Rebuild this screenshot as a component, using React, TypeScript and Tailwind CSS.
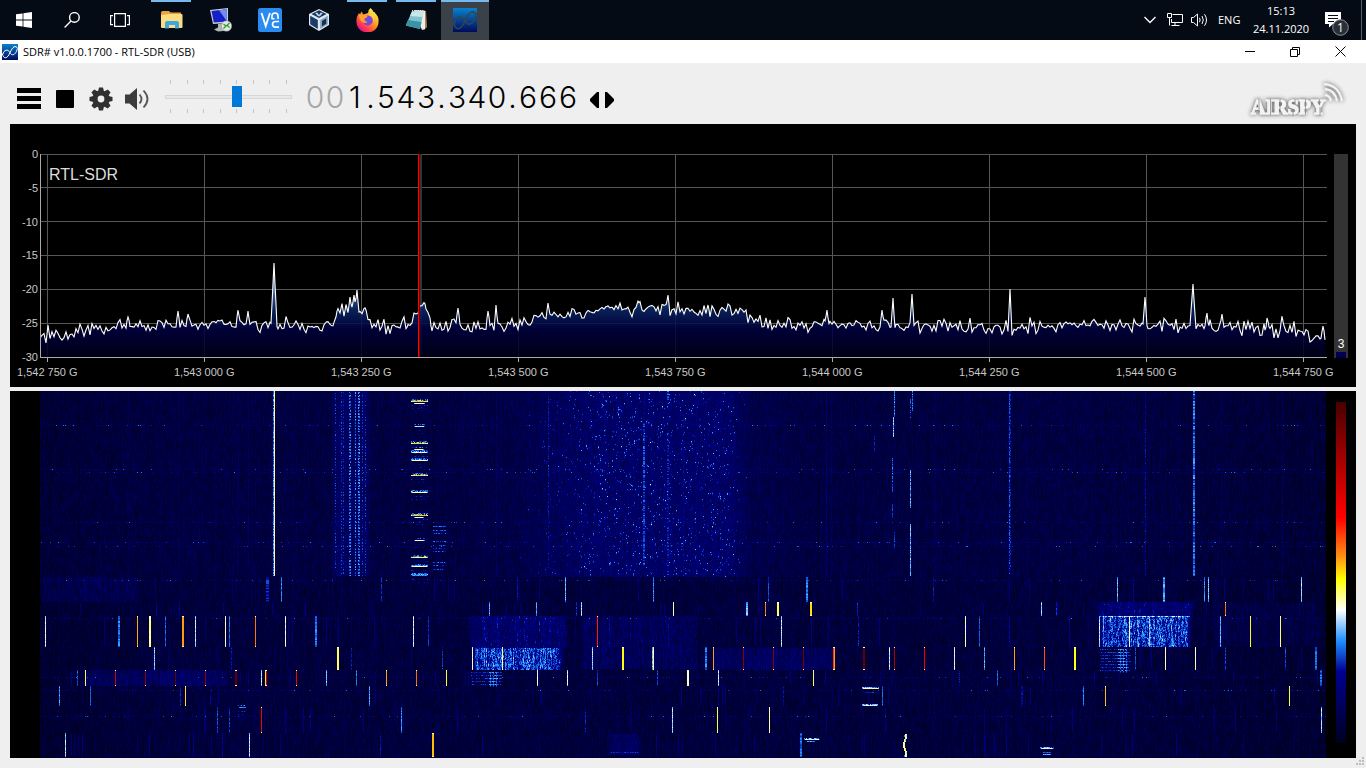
import { ReactNode, useEffect, useRef } from "react";

const FREQ_LABELS = [
  "1,542 750 G",
  "1,543 000 G",
  "1,543 250 G",
  "1,543 500 G",
  "1,543 750 G",
  "1,544 000 G",
  "1,544 250 G",
  "1,544 500 G",
  "1,544 750 G",
];
const DB_LABELS = ["0", "-5", "-10", "-15", "-20", "-25", "-30"];

const PLOT_W = 1287;
const PLOT_H = 204;
const FALL_W = 1286;
const FALL_H = 367;

// Small seeded generator so the noise floor is the same on every render
function createRandom(seed: number) {
  let s = seed;
  return () => {
    s = (s + 0x6d2b79f5) | 0;
    let t = Math.imul(s ^ (s >>> 15), 1 | s);
    t = (t + Math.imul(t ^ (t >>> 7), 61 | t)) ^ t;
    return ((t ^ (t >>> 14)) >>> 0) / 4294967296;
  };
}

/* ---------- Spectrum ---------- */

// [x, y] of the average noise floor
const FLOOR: [number, number][] = [
  [0, 184], [20, 180], [60, 175], [110, 172], [160, 171], [230, 171],
  [293, 172], [297, 158], [312, 155], [325, 158], [330, 172], [367, 173],
  [380, 154], [385, 151], [391, 172], [480, 171], [500, 164], [540, 158],
  [580, 156], [640, 155], [690, 158], [700, 160], [725, 170], [780, 171],
  [840, 173], [960, 175], [1060, 172], [1150, 172], [1210, 175],
  [1260, 179], [1280, 184], [1287, 190],
];

// [x, y, half width] of the carriers
const PEAKS: [number, number, number][] = [
  [88, 163, 1], [138, 157, 1], [148, 160, 1], [198, 156, 1], [208, 157, 1],
  [234, 109, 2], [310, 143, 1], [314, 141, 1], [317, 136, 1], [418, 154, 1],
  [448, 157, 1], [456, 151, 1], [508, 149, 1], [598, 147, 1], [628, 141, 1],
  [668, 151, 1], [787, 156, 1], [842, 156, 1], [853, 144, 1], [872, 140, 1],
  [970, 135, 1], [1105, 143, 1], [1153, 130, 2], [1167, 159, 1],
  [1182, 160, 1], [1227, 164, 1], [1242, 162, 1], [1283, 172, 1],
];

function floorAt(x: number) {
  for (let i = 1; i < FLOOR.length; i++) {
    const [x1, y1] = FLOOR[i];
    if (x <= x1) {
      const [x0, y0] = FLOOR[i - 1];
      return y0 + ((x - x0) / (x1 - x0)) * (y1 - y0);
    }
  }
  return FLOOR[FLOOR.length - 1][1];
}

function buildTrace() {
  const random = createRandom(23);
  const points: string[] = [];
  let previous = 0;
  let next = 0;
  for (let x = 0; x < FALL_W; x++) {
    // The bins are wider than a pixel, so the noise changes every other column
    if (x % 2 === 0) {
      previous = next;
      const spike = random() < 0.09 ? random() * 8 : 0;
      next = (random() + random() - 1) * 8 - spike;
    }
    const noise = x % 2 === 0 ? previous : (previous + next) / 2;
    let y = floorAt(x) + noise;
    for (const [px, py, half] of PEAKS) {
      const d = Math.abs(x - px);
      if (d <= half) y = Math.min(y, py + (d / (half + 1)) * (y - py));
    }
    points.push(`${x} ${y.toFixed(1)}`);
  }
  return points;
}

const TRACE = buildTrace();
const TRACE_PATH = `M${TRACE.join("L")}`;
const FILL_PATH = `M0 203L${TRACE.join("L")}L1286 203Z`;
const GRID_X = [7, 164, 321, 478, 635, 792, 949, 1106, 1263];
const GRID_Y = [0, 33, 67, 101, 135, 169];

function Spectrum() {
  return (
    <section aria-label="Spectrum" className="bg-black pt-6 pb-[7px]">
      <div className="flex h-[215px]">
        <div className="flex w-[30px] shrink-0 flex-col justify-between pr-[2px] text-right text-[11px] leading-3 text-[#c8c8c8]">
          {DB_LABELS.map((db) => (
            <span key={db}>{db}</span>
          ))}
        </div>
        <div className="relative min-w-0 flex-1 pt-[6px]">
          <svg
            viewBox={`0 0 ${PLOT_W} 209`}
            preserveAspectRatio="none"
            className="block h-[209px] w-full"
          >
            <defs>
              <linearGradient id="spectrumFill" gradientUnits="userSpaceOnUse" x1="0" y1="0" x2="0" y2={PLOT_H}>
                <stop offset="0" stopColor="#ffffff" />
                <stop offset="0.55" stopColor="#76a5ea" />
                <stop offset="0.68" stopColor="#4a6cae" />
                <stop offset="0.76" stopColor="#0a2868" />
                <stop offset="0.86" stopColor="#000040" />
                <stop offset="1" stopColor="#000018" />
              </linearGradient>
            </defs>
            <g stroke="#565656" shapeRendering="crispEdges">
              {GRID_Y.map((y) => (
                <line key={y} x1="0" x2={PLOT_W} y1={y + 0.5} y2={y + 0.5} />
              ))}
              {GRID_X.map((x) => (
                <line key={x} x1={x + 0.5} x2={x + 0.5} y1="0" y2="203" />
              ))}
            </g>
            <rect x="379" y="0" width="3" height="203" fill="#333333" />
            <path d={FILL_PATH} fill="url(#spectrumFill)" fillOpacity="0.86" />
            <path d={TRACE_PATH} fill="none" stroke="#ffffff" strokeWidth="1.1" />
            <rect x="378" y="0" width="1" height="203" fill="#ff0000" />
            <rect x="379" y="0" width="1" height="203" fill="#7a0000" />
            <g stroke="#aaaaaa" shapeRendering="crispEdges">
              <line x1="0.5" x2="0.5" y1="0" y2="203" />
              <line x1="0" x2={PLOT_W} y1="203.5" y2="203.5" />
              {GRID_X.map((x) => (
                <line key={x} x1={x + 0.5} x2={x + 0.5} y1="203" y2="208" />
              ))}
            </g>
          </svg>
          <span className="absolute top-[18px] left-[9px] text-base leading-[18px] text-[#dcdcdc]">
            RTL-SDR
          </span>
        </div>
        <div className="mt-[6px] mr-2 ml-[7px] flex h-[204px] w-[14px] shrink-0 flex-col items-center justify-end bg-[#333333] text-xs leading-4 text-white">
          <span>3</span>
          <div className="h-[6px] w-[10px] bg-[#000050]" />
        </div>
      </div>
      <div className="flex justify-between pt-[2px] pr-[23px] pl-[7px] text-[11px] leading-[15px] text-[#c8c8c8]">
        {FREQ_LABELS.map((f) => (
          <span key={f} className="w-[60px] text-center whitespace-nowrap">
            {f}
          </span>
        ))}
      </div>
    </section>
  );
}

/* ---------- Waterfall ---------- */

// Signal strength to colour, from the noise floor to the strongest level
const PALETTE: [number, number, number, number][] = [
  [0, 0, 0, 32],
  [0.21, 0, 0, 145],
  [0.3, 30, 144, 255],
  [0.39, 255, 255, 255],
  [0.48, 255, 255, 0],
  [0.55, 254, 140, 20],
  [0.66, 255, 0, 0],
  [1, 74, 0, 0],
];

type Mark = [x: number, width: number, level: number];

// Short bursts, grouped by the time slot they were sent in
const SLOTS: { from: number; to: number; marks: Mark[] }[] = [
  {
    from: 187,
    to: 210,
    marks: [
      [226, 3, 0.24], [241, 1, 0.3], [341, 1, 0.24], [477, 1, 0.22],
      [525, 1, 0.33], [598, 1, 0.18], [613, 1, 0.3], [728, 1, 0.26],
      [766, 2, 0.3], [893, 1, 0.22], [1077, 1, 0.33], [1093, 1, 0.2],
      [1123, 2, 0.32], [1164, 1, 0.3], [1168, 1, 0.34], [1261, 1, 0.36],
    ],
  },
  {
    from: 212,
    to: 224,
    marks: [
      [116, 1, 0.22], [139, 1, 0.2], [265, 1, 0.2], [449, 1, 0.32],
      [496, 1, 0.32], [536, 1, 0.25], [541, 1, 0.37], [633, 1, 0.42],
      [706, 2, 0.34], [725, 1, 0.57], [737, 2, 0.44], [770, 2, 0.5],
      [817, 1, 0.24], [1001, 1, 0.36], [1016, 1, 0.25], [1185, 1, 0.58],
    ],
  },
  {
    from: 226,
    to: 255,
    marks: [
      [5, 1, 0.39], [78, 2, 0.29], [97, 1, 0.53], [109, 2, 0.43],
      [125, 1, 0.27], [142, 2, 0.54], [155, 1, 0.37], [185, 1, 0.41],
      [189, 1, 0.29], [215, 1, 0.57], [245, 1, 0.39], [275, 2, 0.29],
      [373, 1, 0.38], [388, 1, 0.24], [557, 1, 0.64], [569, 1, 0.2],
      [628, 1, 0.2], [741, 1, 0.37], [788, 1, 0.17], [818, 1, 0.23],
      [925, 1, 0.41], [939, 1, 0.27], [969, 1, 0.2], [1029, 1, 0.2],
      [1059, 1, 0.37], [1089, 1, 0.41], [1109, 1, 0.34], [1180, 1, 0.33],
      [1210, 1, 0.48], [1240, 1, 0.45],
    ],
  },
  {
    from: 257,
    to: 278,
    marks: [
      [114, 1, 0.35], [191, 1, 0.22], [297, 2, 0.45], [311, 1, 0.23],
      [402, 1, 0.24], [432, 1, 0.41], [462, 1, 0.43], [552, 1, 0.36],
      [582, 2, 0.48], [612, 1, 0.34], [613, 1, 0.44], [665, 2, 0.29],
      [673, 1, 0.54], [703, 1, 0.88], [733, 1, 0.88], [763, 1, 0.92],
      [793, 1, 0.62], [794, 1, 0.54], [823, 2, 0.96], [849, 1, 0.37],
      [854, 1, 0.82], [884, 1, 0.68], [914, 1, 0.4], [944, 1, 0.32],
      [974, 1, 0.54], [1004, 1, 0.6], [1034, 2, 0.47], [1095, 1, 0.25],
      [1125, 1, 0.42], [1155, 1, 0.42], [1185, 1, 0.25], [1245, 1, 0.25],
      [1275, 2, 0.28],
    ],
  },
  {
    from: 280,
    to: 294,
    marks: [
      [37, 1, 0.27], [45, 1, 0.47], [75, 1, 0.75], [105, 1, 0.88],
      [135, 1, 0.96], [165, 1, 0.88], [195, 2, 0.96], [221, 1, 0.37],
      [225, 1, 0.5], [226, 1, 0.76], [256, 1, 0.7], [286, 1, 0.34],
      [316, 1, 0.29], [346, 1, 0.54], [376, 1, 0.58], [406, 1, 0.47],
      [497, 1, 0.4], [527, 1, 0.38], [557, 1, 0.26], [617, 1, 0.25],
      [647, 2, 0.42], [678, 1, 0.36], [773, 1, 0.46], [919, 1, 0.22],
      [957, 1, 0.27], [1280, 2, 0.28],
    ],
  },
  {
    from: 296,
    to: 314,
    marks: [
      [19, 1, 0.31], [50, 1, 0.27], [140, 1, 0.24], [145, 1, 0.5],
      [170, 1, 0.2], [329, 1, 0.32], [682, 1, 0.17], [743, 1, 0.22],
      [798, 1, 0.17], [842, 1, 0.27], [981, 2, 0.21], [1043, 1, 0.3],
      [1065, 1, 0.52], [1249, 1, 0.47],
    ],
  },
  {
    from: 317,
    to: 341,
    marks: [
      [177, 1, 0.26], [189, 1, 0.24], [221, 1, 0.68], [361, 1, 0.3],
      [545, 1, 0.23], [632, 1, 0.37], [677, 1, 0.46], [729, 1, 0.44],
      [1281, 1, 0.36],
    ],
  },
  {
    from: 343,
    to: 365,
    marks: [
      [25, 1, 0.36], [182, 1, 0.2], [209, 1, 0.37], [340, 1, 0.22],
      [392, 2, 0.52], [760, 2, 0.28], [944, 2, 0.16],
    ],
  },
];

// Carriers that last: [x, from, to, width, level]
const CARRIERS: [number, number, number, number, number][] = [
  [233, 0, 185, 1, 0.31], [234, 0, 185, 1, 0.45], [508, 0, 178, 1, 0.22],
  [604, 0, 32, 1, 0.2], [603, 32, 175, 2, 0.26], [627, 0, 10, 2, 0.27],
  [627, 42, 184, 2, 0.23], [643, 20, 184, 1, 0.2], [656, 0, 184, 1, 0.19],
  [786, 0, 185, 1, 0.18], [791, 0, 185, 1, 0.12], [834, 45, 62, 1, 0.24],
  [854, 0, 26, 1, 0.3], [853, 26, 46, 1, 0.35], [852, 67, 101, 1, 0.28],
  [852, 112, 128, 1, 0.25], [854, 140, 158, 1, 0.26], [872, 0, 20, 1, 0.3],
  [870, 8, 28, 1, 0.26], [870, 79, 117, 1, 0.33], [870, 133, 185, 1, 0.34],
  [895, 0, 185, 1, 0.12], [969, 0, 183, 1, 0.27], [970, 0, 183, 1, 0.22],
  [1105, 0, 185, 1, 0.21], [1153, 0, 185, 2, 0.3], [1242, 0, 185, 1, 0.13],
  [444, 0, 185, 1, 0.13], [456, 0, 185, 1, 0.15], [208, 0, 185, 1, 0.13],
  [198, 0, 185, 1, 0.12], [88, 0, 185, 1, 0.1], [138, 0, 185, 1, 0.11],
  [268, 0, 185, 1, 0.11], [987, 0, 185, 1, 0.12], [1181, 0, 185, 1, 0.12],
];

// Wide band noise: [x0, x1, y0, y1, level, spread]
const BANDS: [number, number, number, number, number, number][] = [
  [291, 331, 0, 185, 0.06, 0.03],
  [428, 529, 225, 257, 0.09, 0.06],
  [431, 524, 257, 279, 0.19, 0.07],
  [540, 660, 225, 278, 0.05, 0.045],
  [670, 796, 257, 279, 0.06, 0.04],
  [40, 190, 279, 295, 0.06, 0.035],
  [0, 100, 186, 211, 0.04, 0.025],
  [1055, 1155, 211, 226, 0.1, 0.05],
  [1058, 1152, 225, 256, 0.19, 0.07],
  [1170, 1284, 212, 256, 0.025, 0.03],
  [566, 602, 343, 364, 0.06, 0.035],
];

// Voice frames drawn as short horizontal dashes: [x0, x1, y, level]
const FRAMES: [number, number, number, number][] = [
  [371, 388, 10, 0.53], [374, 385, 12, 0.45], [374, 385, 35, 0.4],
  [371, 388, 52, 0.53], [374, 384, 58, 0.46], [371, 388, 61, 0.42],
  [371, 388, 69, 0.44], [371, 388, 84, 0.52], [371, 388, 101, 0.44],
  [371, 388, 124, 0.55], [374, 384, 126, 0.46], [374, 385, 149, 0.42],
  [371, 388, 166, 0.49], [371, 388, 175, 0.44], [371, 388, 184, 0.33],
  [198, 207, 316, 0.33], [822, 839, 297, 0.46], [824, 836, 301, 0.26],
  [822, 838, 314, 0.41], [764, 780, 348, 0.41], [766, 776, 350, 0.34],
  [1000, 1014, 357, 0.41], [1002, 1012, 361, 0.31], [1002, 1012, 363, 0.34],
  [569, 600, 361, 0.26],
];

const DOTTED_ROWS = [34, 78, 81, 131, 151, 155, 189, 227, 286, 299, 325];

function renderWaterfall(ctx: CanvasRenderingContext2D) {
  const random = createRandom(42);
  const level = new Float32Array(FALL_W * FALL_H);
  const set = (x: number, y: number, v: number) => {
    if (x < 0 || y < 0 || x >= FALL_W || y >= FALL_H) return;
    const i = y * FALL_W + x;
    level[i] = Math.max(level[i], v);
  };

  // Noise floor, streaky along the time axis
  for (let x = 0; x < FALL_W; x++) {
    const edge = Math.max(0, Math.min(1, x / 140, (FALL_W - x) / 200));
    const hump = Math.max(0, Math.min((x - 470) / 90, 1, (710 - x) / 20));
    const halo = Math.max(0, Math.min((x - 400) / 120, 1, (780 - x) / 70));
    const column = (random() - 0.5) * 0.018;
    let drift = 0;
    let speck = 0;
    for (let y = 0; y < FALL_H; y++) {
      drift = drift * 0.65 + (random() - 0.5) * 0.055;
      const floor = (y < 186 ? 0.04 : 0.032) + edge * 0.02;
      let v = floor + column + drift;
      if (y < 186) {
        v += halo * 0.018 + hump * (0.05 + (random() - 0.5) * 0.08);
        if (random() < 0.05 * hump) speck = 0.05 + random() * 0.12;
        v += speck;
        speck = speck > 0.05 ? speck * 0.5 : 0;
      }
      level[y * FALL_W + x] = Math.max(0, v);
    }
  }

  for (const [x0, x1, y0, y1, add, spread] of BANDS) {
    for (let x = x0; x < x1; x++) {
      const column = (random() - 0.5) * spread;
      const taper = Math.min(1, (x - x0 + 1) / 6, (x1 - x) / 6);
      let drift = 0;
      for (let y = y0; y < y1; y++) {
        drift = drift * 0.4 + (random() - 0.5) * spread * 1.8;
        const v = (add + column + drift) * taper;
        level[y * FALL_W + x] += Math.max(0, v);
      }
    }
  }

  // Dotted data carriers
  for (const x of [295, 301, 303, 309, 310, 315, 318, 319, 322, 325]) {
    const strong = x >= 309 && x <= 319;
    for (let y = 1; y < 185; y++) {
      if (y % 3 && random() < 0.85) {
        set(x, y, (strong ? 0.24 : 0.19) + random() * 0.09);
      }
    }
  }
  for (const [x0, y0, y1] of [[431, 281, 294], [1060, 258, 280]]) {
    for (let y = y0; y < y1; y += 3) {
      for (let x = x0; x < x0 + 31; x++) {
        const strong = x > x0 + 17 && x < x0 + 27;
        if (random() < 0.85) set(x, y, (strong ? 0.26 : 0.19) + random() * 0.08);
        if (strong && x % 3 === 0) {
          set(x, y + 1, 0.28);
          set(x, y + 2, 0.24);
        }
        if (random() < 0.5) set(x, y + 1, 0.15);
      }
    }
  }

  for (const y of DOTTED_ROWS) {
    for (let x = 0; x < FALL_W; x++) {
      if (random() < 0.4) set(x, y, 0.12 + random() * 0.06);
      if (random() < 0.045) set(x, y, 0.2 + random() * 0.1);
    }
  }

  // Weak short lived traces
  for (let i = 0; i < 190; i++) {
    const x = Math.floor(random() * FALL_W);
    const slot = SLOTS[Math.floor(random() * SLOTS.length)];
    const weak = 0.09 + random() * 0.08;
    for (let y = slot.from; y < slot.to; y++) set(x, y, weak + random() * 0.04);
  }

  for (const [x, y0, y1, width, v] of CARRIERS) {
    for (let y = y0; y < y1; y++) {
      const fade = v > 0.4 ? random() * 0.06 : random() * 0.11 - 0.03;
      for (let k = 0; k < width; k++) set(x + k, y, v - fade);
    }
  }

  for (const { from, to, marks } of SLOTS) {
    for (const [x, width, v] of marks) {
      for (let y = from; y < to; y++) {
        const wobble = v < 0.45 ? (random() - 0.6) * 0.07 : 0;
        for (let k = 0; k < width; k++) set(x + k, y, v + wobble);
      }
      // Key-up and key-down edges are weaker than the burst itself
      for (let k = 0; k < width; k++) {
        set(x + k, from - 1, Math.min(v * 0.9, 0.4));
        set(x + k, to, Math.min(v * 0.9, 0.44));
      }
    }
  }

  for (const [x0, x1, y, v] of FRAMES) {
    const wide = x1 - x0 > 13 && x1 - x0 < 20;
    for (let x = x0; x < x1; x++) {
      const tail = x === x0 || x === x1 - 1 ? 0.1 : 0;
      set(x, y, v - tail - random() * 0.06);
      if (wide && random() < 0.9) set(x, y - 1, 0.25 + random() * 0.12);
      if (x < 400 && random() < 0.6) set(x, y - 2, 0.22 + random() * 0.1);
      if (x < 400 && random() < 0.6) set(x, y + 4, 0.16 + random() * 0.09);
      if (x < 400 && random() < 0.5) set(x, y + 7, 0.16 + random() * 0.08);
    }
  }
  for (const y of [135, 139, 142, 150, 154, 157, 160, 171, 174, 178]) {
    for (let x = 393; x < 406; x++) {
      if (random() < 0.85) set(x, y, 0.19 + random() * 0.11);
      if (random() < 0.3) set(x, y + 1, 0.16);
    }
  }

  // Drifting carrier
  for (let y = 343; y < 366; y++) {
    const x = 864 + Math.round(Math.sin(y / 3));
    set(x, y, 0.38 + random() * 0.08);
    set(x + 1, y, 0.34 + random() * 0.14);
    if (random() < 0.4) set(x - 1, y, 0.3);
  }

  const image = ctx.createImageData(FALL_W, FALL_H);
  for (let i = 0; i < level.length; i++) {
    const v = Math.min(0.999, level[i]);
    let s = 1;
    while (PALETTE[s][0] <= v) s++;
    const a = PALETTE[s - 1];
    const b = PALETTE[s];
    const t = (v - a[0]) / (b[0] - a[0]);
    image.data[i * 4] = a[1] + (b[1] - a[1]) * t;
    image.data[i * 4 + 1] = a[2] + (b[2] - a[2]) * t;
    image.data[i * 4 + 2] = a[3] + (b[3] - a[3]) * t;
    image.data[i * 4 + 3] = 255;
  }
  ctx.putImageData(image, 0, 0);
}

function Waterfall() {
  const canvasRef = useRef<HTMLCanvasElement>(null);

  useEffect(() => {
    const ctx = canvasRef.current?.getContext("2d");
    if (ctx) renderWaterfall(ctx);
  }, []);

  return (
    <section aria-label="Waterfall" className="flex min-h-0 flex-1 bg-black pr-[10px] pl-[30px]">
      <div className="min-h-0 min-w-0 flex-1">
        <canvas
          ref={canvasRef}
          width={FALL_W}
          height={FALL_H}
          className="block size-full [image-rendering:pixelated]"
        />
      </div>
      <div className="mt-[11px] mb-[15px] ml-[10px] w-[10px] bg-[linear-gradient(to_bottom,#4a0000_0%,#ff0000_34%,#fe8c14_45%,#ffff00_52%,#ffffff_61%,#1e90ff_70%,#000091_79%,#000020_100%)]" />
    </section>
  );
}

/* ---------- Taskbar ---------- */

interface TaskButtonProps {
  label: string;
  state?: "idle" | "running" | "active";
  children: ReactNode;
}

function TaskButton({ label, state = "idle", children }: TaskButtonProps) {
  return (
    <button
      aria-label={label}
      className={
        state === "active"
          ? "relative flex h-10 w-12 items-center justify-center bg-[#3b4148]"
          : "relative flex h-10 w-[49px] items-center justify-center"
      }
    >
      {state === "running" && (
        <span className="absolute top-0 left-1 h-[2px] w-10 bg-[#76b9ed]" />
      )}
      {state === "active" && (
        <span className="absolute inset-x-0 top-0 h-[2px] bg-[#76b9ed]" />
      )}
      {children}
    </button>
  );
}

function Taskbar() {
  return (
    <header className="flex h-10 shrink-0 justify-between bg-[#050b14] font-['Open_Sans',sans-serif] text-white">
      <nav className="flex" aria-label="Taskbar">
        <button aria-label="Start" className="flex w-12 items-center justify-center">
          <svg width="16" height="16" viewBox="0 0 16 16" fill="#fff">
            <path d="M0 2.3 6.6 1.4V7.6H0zM7.4 1.3 16 0V7.6H7.4zM0 8.4h6.6v6.2L0 13.7zM7.4 8.4H16V16L7.4 14.8z" />
          </svg>
        </button>
        <button aria-label="Search" className="flex w-12 items-center justify-center">
          <svg width="16" height="16" viewBox="0 0 16 16" fill="none" stroke="#fff" strokeWidth="1.4">
            <circle cx="10.4" cy="5.4" r="4.8" />
            <path d="M7 9 .6 15.4" />
          </svg>
        </button>
        <button aria-label="Task view" className="flex w-12 items-center justify-center">
          <svg width="20" height="14" viewBox="0 0 20 14" fill="none" stroke="#fff" strokeWidth="1.2">
            <path d="M4.6.6h10.8v12.8H4.6zM3 2.6H.6v9H3M17 2.6h2.4v9H17" />
          </svg>
        </button>
        <div className="ml-[3px] flex">
          <TaskButton label="File Explorer" state="running">
            <svg width="22" height="20" viewBox="0 0 22 20">
              <path d="M0 2.5 1 1h7l1.5 1.5H20V6H0z" fill="#e8a33d" />
              <path d="M0 5 9 4h11.5q1 0 1 1v12q0 1-1 1H1q-1 0-1-1z" fill="#fbdc82" />
              <path d="M4 18.5V13q0-2 2-2h10q2 0 2 2v5.5h-4V15H8v3.5z" fill="#3fa7e0" />
            </svg>
          </TaskButton>
          <TaskButton label="Remote Desktop">
            <svg width="22" height="24" viewBox="0 0 22 24">
              <path d="m0 2 18-2v15L3 16z" fill="#c9cfd2" />
              <path d="m1.500 3 15.300-1.700v12.200L3.800 14.500z" fill="#1620c8" />
              <path d="m9 2.200 7.800-.9v12z" fill="#6f8dee" />
              <path d="m8 16 6-.5 1 4 4 3-11 1-4-2 4-2z" fill="#aeb6b8" />
              <circle cx="16.500" cy="18" r="5.200" fill="#e4e8e4" stroke="#8a9090" strokeWidth=".6" />
              <path d="m13.500 16 2.500 2-2.500 2.500M19.500 15 17 17.200l2.500 2.300" fill="none" stroke="#2f9a35" strokeWidth="1.300" />
            </svg>
          </TaskButton>
          <TaskButton label="VNC Viewer">
            <svg width="24" height="24" viewBox="0 0 24 24" fill="none" stroke="#fff" strokeWidth="1.900">
              <rect width="24" height="24" rx="2.500" fill="#2a8cf0" stroke="none" />
              <path d="m3.500 5 4.200 13L12 5" />
              <path d="M14 11V8q0-3 3-3t3 3v3M21 13.500h-3.500q-3 0-3 2.800t3 2.800H21M13.500 10.800h3" strokeWidth="1.600" />
            </svg>
          </TaskButton>
          <TaskButton label="VirtualBox">
            <svg width="20" height="22" viewBox="0 0 20 22">
              <path d="m10 0 10 5v11l-10 6-10-6V5z" fill="#dfe8f0" />
              <path d="m10 1.300 7.500 3.700L10 9 2.500 5z" fill="#16365e" />
              <path d="m1.200 6.800 7.600 4.200v8.900l-7.600-4.600z" fill="#1a3c68" />
              <path d="m18.800 6.800-7.600 4.200v8.900l7.600-4.600z" fill="#85a2bf" />
              <path d="m13 12 4.200-2.400v5.200L13 17.300z" fill="#16304f" />
              <path d="M6 3.800h2.500L10 6l1.500-2.200H14L11 7.300H9z" fill="#c5d4e3" />
            </svg>
          </TaskButton>
          <TaskButton label="Firefox" state="running">
            <svg width="23" height="24" viewBox="0 0 23 24">
              <defs>
                <linearGradient id="fox" x1="0.800" y1="0.100" x2="0.200" y2="0.900">
                  <stop offset="0" stopColor="#fff04a" />
                  <stop offset="0.450" stopColor="#ff9220" />
                  <stop offset="0.800" stopColor="#ff3a4c" />
                  <stop offset="1" stopColor="#e3148b" />
                </linearGradient>
              </defs>
              <path d="M14.500 0q2 1.500 3 4 1.500-.3 1.500 1 4 3.500 3.500 9A11 10.500 0 0 1 .5 14Q0 9 3 5q0 1 .8 1.800Q5 4 6 3.500q0 2 1.500 3L12 5q.3-3.500 2.500-5z" fill="url(#fox)" />
              <circle cx="11.800" cy="12.500" r="5" fill="#7a45e0" />
              <path d="M2.800 5.500q2.500 1.500 5 1.200 3-.3 3.700 1.800-.5 1.500-3 2-.5 3 3.300 3.500-3.500 2-6.300-.5T2.800 5.500z" fill="#ffa12c" />
              <path d="M13 7.500q5 1 4.500 6.500 3-7-2.500-10z" fill="#ffd23c" />
            </svg>
          </TaskButton>
          <TaskButton label="Notepad" state="running">
            <svg width="24" height="24" viewBox="0 0 24 24">
              <path d="m9 2 12 1 1 16-3 3z" fill="#b8853f" />
              <path d="m9 2 11 .8L20 21l-3 1z" fill="#e9eff0" />
              <path d="M7 3.200 18.500 4 15 21 .8 17.500z" fill="#7fc3ce" />
              <path d="M7 3.200 18.500 4l-1 5L5 8z" fill="#c5e6ea" />
              <path d="m3 12 13.500 2L15 21 .8 17.500z" fill="#3a93a5" />
              <path d="M7 2.800h12" stroke="#d5dadb" strokeWidth="1.600" strokeDasharray="1.200 .8" />
            </svg>
          </TaskButton>
          <TaskButton label="SDR#" state="active">
            <SdrIcon size={24} stroke="#36444f" />
          </TaskButton>
        </div>
      </nav>

      <div className="flex items-center text-[11px] leading-[18px]">
        <button aria-label="Show hidden icons" className="mr-[11px]">
          <svg width="12" height="8" viewBox="0 0 12 8" fill="none" stroke="#fff" strokeWidth="1.300" className="block">
            <path d="m.5 1 5.500 5.500L11.500 1" />
          </svg>
        </button>
        <button aria-label="Network" className="mr-[8px]">
          <svg width="16" height="14" viewBox="0 0 16 14" fill="none" stroke="#fff" className="block">
            <path d="M5.500 1.500h10v8H4.500V6M.5.500h4v4h-4zM2.500 4.500v8M8 9.500v3M4.500 12.500h8" />
          </svg>
        </button>
        <button aria-label="Volume" className="mr-[10px]">
          <svg width="17" height="14" viewBox="0 0 17 14" fill="none" stroke="#fff" className="block">
            <path d="M.5 4.500h2l4-3.500v12l-4-3.500h-2zM8.500 4.800q1.300 2.200 0 4.400M11 3q2.600 4 0 8M13.500 1.200q4 5.800 0 11.600" />
          </svg>
        </button>
        <span className="w-[24px]">ENG</span>
        <div className="ml-[10px] flex w-[58px] flex-col text-center">
          <span>15:13</span>
          <span>24.11.2020</span>
        </div>
        <button aria-label="Notifications" className="ml-[14px] flex w-[28px] self-stretch pt-3">
          <svg width="25" height="25" viewBox="0 0 25 25">
            <path d="M1 0h16v12H9l-4 3.500V12H1z" fill="#fff" />
            <path d="M4 3.500h10M4 6.500h10M4 9.500h6" stroke="#050b14" />
            <circle cx="16.500" cy="15.500" r="7.800" fill="#2b3036" stroke="#8d9297" />
            <text x="16.500" y="20" textAnchor="middle" fontSize="12" fill="#fff">
              1
            </text>
          </svg>
        </button>
        <span className="mr-1 ml-[9px] h-10 w-px bg-[#5a5f66]" />
      </div>
    </header>
  );
}

/* ---------- Window ---------- */

function SdrIcon({ size, stroke }: { size: number; stroke: string }) {
  return (
    <svg width={size} height={size} viewBox="0 0 24 24">
      <defs>
        <linearGradient id={`sdr${size}`} x1="0" y1="0" x2="0" y2="1">
          <stop offset="0" stopColor="#0a82cc" />
          <stop offset="1" stopColor="#000a5c" />
        </linearGradient>
      </defs>
      <rect width="24" height="24" fill={`url(#sdr${size})`} />
      <path
        d="M0 14C3 24 8 22 12 13S20 1 24 7M1 16C3 8 9 7 12 13S21 16 23 7"
        fill="none"
        stroke={stroke}
        strokeWidth="1.500"
      />
    </svg>
  );
}

function TitleBar() {
  return (
    <div className="flex h-[23px] shrink-0 items-center justify-between bg-white pr-5 pl-[2px] text-black">
      <div className="flex items-center gap-[5px]">
        <SdrIcon size={16} stroke="#ffffff" />
        <h1 className="font-['Open_Sans',sans-serif] text-[11px] leading-4">SDR# v1.0.0.1700 - RTL-SDR (USB)</h1>
      </div>
      <div className="flex items-center gap-[35px]">
        <button aria-label="Minimize">
          <svg width="10" height="10" viewBox="0 0 10 10" className="block" stroke="#000">
            <path d="M0 4.500h10" />
          </svg>
        </button>
        <button aria-label="Restore">
          <svg width="10" height="10" viewBox="0 0 10 10" className="block" stroke="#000" fill="none">
            <path d="M.5 2.500h7v7h-7zM2.500 2.500v-2h7v7h-2" />
          </svg>
        </button>
        <button aria-label="Close">
          <svg width="11" height="11" viewBox="0 0 11 11" className="block" stroke="#000">
            <path d="m.5.500 10 10M10.500.500l-10 10" />
          </svg>
        </button>
      </div>
    </div>
  );
}

function Ticks() {
  return (
    <div className="flex justify-between px-[5px]">
      {Array.from({ length: 8 }, (_, i) => (
        <span key={i} className="h-1 w-px bg-[#c4c4c4]" />
      ))}
    </div>
  );
}

function GearIcon() {
  return (
    <svg width="24" height="24" viewBox="0 0 24 24" className="block" fill="#303030">
      <g>
        {[0, 45, 90, 135].map((angle) => (
          <path
            key={angle}
            d="m10 .5h4l1 4v15l-1 4h-4l-1-4v-15z"
            transform={`rotate(${angle} 12 12)`}
          />
        ))}
        <circle cx="12" cy="12" r="8.500" />
      </g>
      <circle cx="12" cy="12" r="3.400" fill="#efefef" />
    </svg>
  );
}

function AirspyLogo() {
  return (
    <svg width="104" height="44" viewBox="0 0 104 44" role="img" aria-label="Airspy" className="block">
      <defs>
        <filter id="glow" x="-20%" y="-40%" width="140%" height="180%">
          <feDropShadow dx="0" dy="0" stdDeviation="2.200" floodColor="#303030" floodOpacity="1" />
        </filter>
      </defs>
      <g filter="url(#glow)">
        <text
          x="8"
          y="37"
          fontFamily="Liberation Serif, serif"
          fontWeight="bold"
          fontSize="20"
          fill="#f4f4f4"
          stroke="#f4f4f4"
          strokeWidth="1"
        >
          AIRSPY
        </text>
        <g fill="none" stroke="#f4f4f4" strokeWidth="1.800">
          <path d="M82 18q5 .5 6 6" />
          <path d="M82 12q10 1 12 12" />
          <path d="M81 7q15 1 18 17" />
        </g>
      </g>
      {/* Stencil cuts */}
      <path d="M16 22v16M27.500 22v16M37 22v16M52 22v5M50 34v5M62.500 22v16M77 30v9" stroke="#8c8c8c" strokeWidth=".8" />
    </svg>
  );
}

function Toolbar() {
  const digits = "001.543.340.666".split("");

  return (
    <div className="flex h-[61px] shrink-0 items-center pt-[10px] pr-[19px] pl-[17px]">
      <button aria-label="Menu" className="flex w-6 flex-col gap-[3px]">
        <span className="h-[5px] bg-black" />
        <span className="h-[5px] bg-black" />
        <span className="h-[5px] bg-black" />
      </button>
      <button aria-label="Stop" className="ml-[15px] size-[18px] rounded-[1px] bg-black" />
      <button aria-label="Settings" className="ml-[15px]">
        <GearIcon />
      </button>
      <button aria-label="Mute" className="ml-[12px]">
        <svg width="25" height="22" viewBox="0 0 25 22" className="block">
          <path d="M0 6.500h4.500L12 0v22l-7.500-6.500H0z" fill="#3c3c3c" />
          <path d="M14.500 6.500q4 4.500 0 9" fill="none" stroke="#555" strokeWidth="1.800" />
          <path d="M18.500 2.500q8 8.500 0 17" fill="none" stroke="#555" strokeWidth="1.800" />
        </svg>
      </button>
      <div className="mb-[4px] ml-[15px] w-[127px]">
        <Ticks />
        <input
          type="range"
          aria-label="Volume"
          defaultValue={57}
          className="my-[2px] block h-[21px] w-full appearance-none bg-transparent [&::-webkit-slider-runnable-track]:h-1 [&::-webkit-slider-runnable-track]:border [&::-webkit-slider-runnable-track]:border-[#d6d6d6] [&::-webkit-slider-runnable-track]:bg-[#e7eaea] [&::-webkit-slider-thumb]:-mt-[10px] [&::-webkit-slider-thumb]:h-[21px] [&::-webkit-slider-thumb]:w-[10px] [&::-webkit-slider-thumb]:appearance-none [&::-webkit-slider-thumb]:bg-[#0078d7]"
        />
        <Ticks />
      </div>
      <div className="ml-[13px] flex pb-1 font-['Inter',sans-serif] text-[30px] leading-8 font-light text-black">
        {digits.map((d, i) => (
          <span
            key={i}
            className={
              d === "."
                ? "w-[11px] text-center"
                : i < 2
                  ? "w-5 text-center text-[#a6a6a6]"
                  : "w-5 text-center"
            }
          >
            {d}
          </span>
        ))}
      </div>
      <div className="ml-3 flex gap-[6px] pt-[2px]">
        <button aria-label="Previous step">
          <svg width="9" height="16" viewBox="0 0 9 16" className="block">
            <path d="M9 0v16H7L0 9V7l7-7z" />
          </svg>
        </button>
        <button aria-label="Next step">
          <svg width="9" height="16" viewBox="0 0 9 16" className="block">
            <path d="M0 0v16h2l7-7V7L2 0z" />
          </svg>
        </button>
      </div>
      <div className="ml-auto">
        <AirspyLogo />
      </div>
    </div>
  );
}

export default function App() {
  return (
    <div className="relative flex h-screen min-h-[600px] flex-col bg-[#efefef] font-['Liberation_Sans',Arial,sans-serif]">
      <Taskbar />
      <TitleBar />
      <Toolbar />
      <main className="flex min-h-0 flex-1 flex-col gap-1 px-[10px] pb-[10px]">
        <Spectrum />
        <Waterfall />
      </main>
      <svg width="9" height="9" viewBox="0 0 9 9" fill="#bdbdbd" className="absolute right-[2px] bottom-[2px]">
        <path d="M7 0h2v2H7zM4 3h2v2H4zM7 3h2v2H7zM1 6h2v2H1zM4 6h2v2H4zM7 6h2v2H7z" />
      </svg>
    </div>
  );
}
